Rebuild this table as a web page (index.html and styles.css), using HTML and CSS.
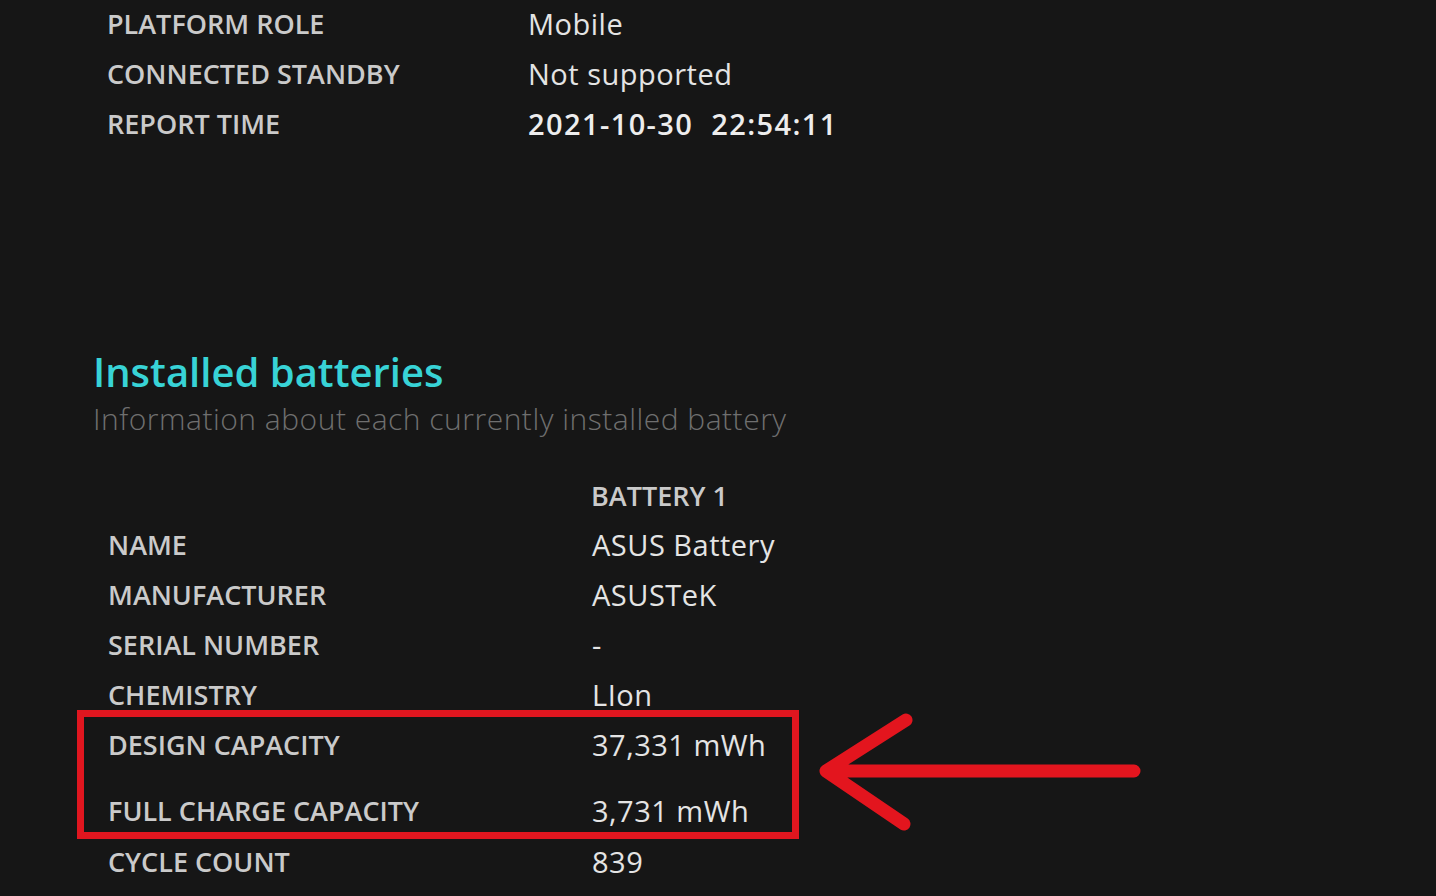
FILE: index.html
```html
<!DOCTYPE html>
<html lang="en">
<head>
<meta charset="utf-8">
<title>Battery report</title>
<link rel="stylesheet" href="styles.css">
</head>
<body>
<main class="report">
  <div class="info">
    <div class="row"><span class="label">PLATFORM ROLE</span><span class="value">Mobile</span></div>
    <div class="row"><span class="label">CONNECTED STANDBY</span><span class="value">Not supported</span></div>
    <div class="row"><span class="label">REPORT TIME</span><span class="value time">2021-10-30&nbsp;&nbsp;22:54:11</span></div>
  </div>

  <section class="batteries">
    <h2 class="title">Installed batteries</h2>
    <p class="sub">Information about each currently installed battery</p>

    <div class="bat">
      <div class="brow head"><span class="label"></span><span class="label col">BATTERY 1</span></div>
      <div class="brow"><span class="label">NAME</span><span class="value">ASUS Battery</span></div>
      <div class="brow"><span class="label">MANUFACTURER</span><span class="value">ASUSTeK</span></div>
      <div class="brow"><span class="label">SERIAL NUMBER</span><span class="value">-</span></div>
      <div class="brow"><span class="label">CHEMISTRY</span><span class="value">LIon</span></div>
      <div class="highlight">
        <div class="brow"><span class="label">DESIGN CAPACITY</span><span class="value">37,331 mWh</span></div>
        <div class="brow"><span class="label">FULL CHARGE CAPACITY</span><span class="value">3,731 mWh</span></div>
      </div>
      <div class="brow"><span class="label">CYCLE COUNT</span><span class="value">839</span></div>
    </div>
  </section>

  <svg class="arrow" width="340" height="130" viewBox="810 706 340 130" aria-hidden="true">
    <path d="M1134 771 L830 771 M906 720 L826 771 L904 824" fill="none" stroke="#e3151e" stroke-width="13" stroke-linecap="round" stroke-linejoin="round"/>
  </svg>
</main>
</body>
</html>
```

FILE: styles.css
```css
html, body {
  margin: 0;
  padding: 0;
  background: #161616;
}

body {
  font-family: "Open Sans", "Noto Sans", sans-serif;
  color: #e2e2e2;
  width: 1436px;
  height: 896px;
  overflow: hidden;
}

.report {
  position: relative;
  height: 896px;
}

.info {
  display: flex;
  flex-direction: column;
  padding-left: 107px;
  position: relative;
  top: -2px;
}

.row {
  display: flex;
  height: 50px;
  align-items: center;
}

.label {
  font-weight: 600;
  font-size: 27px;
  color: #cacaca;
  letter-spacing: 0;
}

.row .label {
  width: 421px;
  flex: none;
}

.value {
  font-size: 29px;
  font-weight: 400;
  color: #e4e4e4;
  letter-spacing: 0.5px;
}

.value.time {
  font-weight: 600;
  color: #ededed;
  letter-spacing: 1.4px;
}

.batteries {
  padding-top: 198px;
}

.title {
  margin: 0 0 0 93px;
  font-size: 40px;
  line-height: 48px;
  font-weight: 600;
  color: #38d3d6;
  letter-spacing: 0;
}

.sub {
  margin: 0 0 0 93px;
  font-size: 30px;
  line-height: 46px;
  font-weight: 300;
  color: #6f6f6f;
  letter-spacing: 0.5px;
}

.bat {
  margin-top: 29px;
  display: flex;
  flex-direction: column;
}

.brow {
  display: flex;
  align-items: center;
  height: 50px;
  padding-left: 108px;
}

.brow .label:first-child {
  width: 484px;
  flex: none;
}

.brow.head {
  height: 48px;
}

.brow.head .col {
  margin-left: -1px;
}

.highlight {
  width: 708px;
  margin-left: 77px;
  margin-top: -9px;
  border: 7px solid #e0161f;
  padding-top: 5px;
  display: flex;
  flex-direction: column;
  gap: 22px;
}

.highlight .brow {
  height: 44px;
  padding-left: 24px;
}

.bat > .brow:last-child {
  height: 44px;
}

.arrow {
  position: absolute;
  left: 810px;
  top: 706px;
}
```
